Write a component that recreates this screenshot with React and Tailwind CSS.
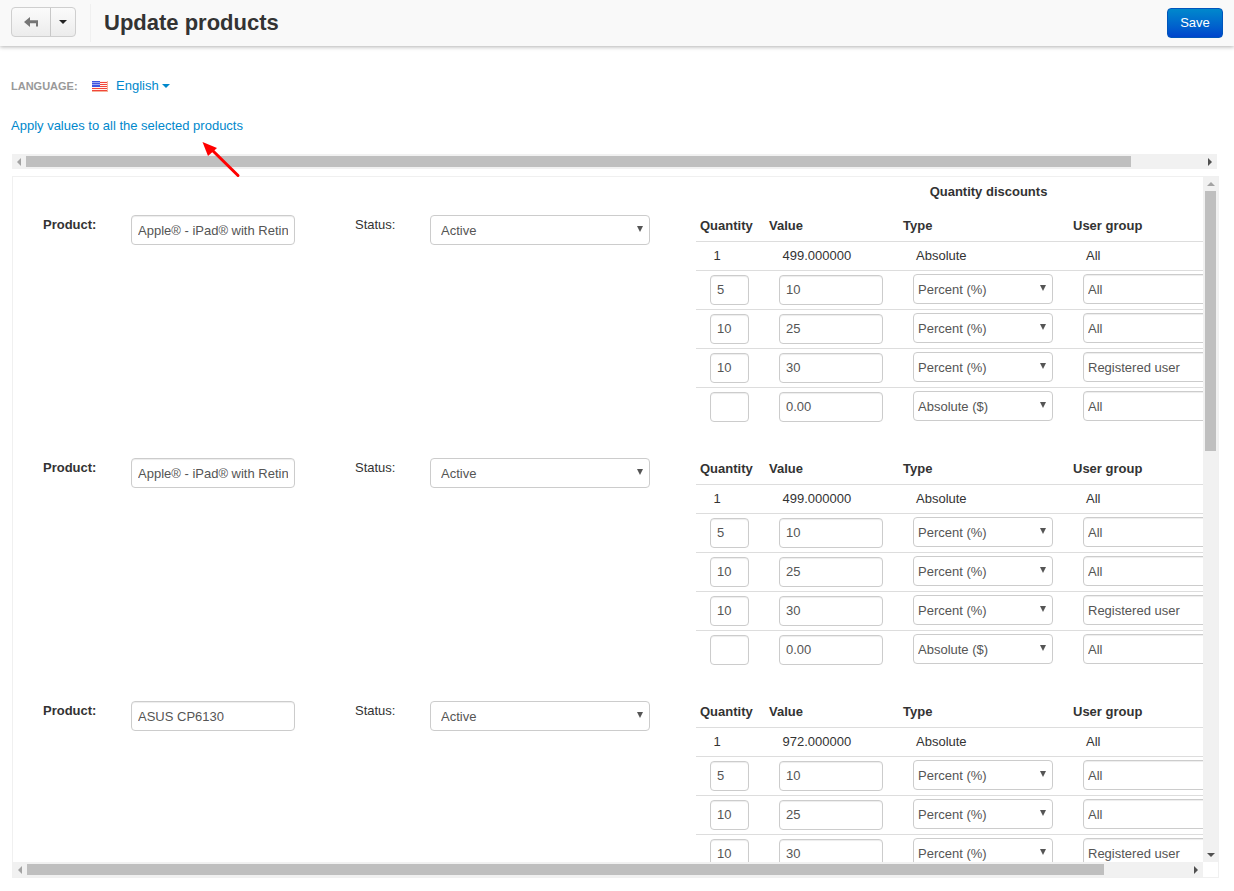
const inputCls = "h-[30px] bg-white border border-[#cccccc] rounded-[4px] px-[6px] text-[13px] text-[#555555] shadow-[inset_0_1px_1px_rgba(0,0,0,0.075)] outline-none";
const selectCls = "appearance-none h-[30px] w-full block bg-white border border-[#cccccc] rounded-[4px] pt-[2px] text-[13px] text-[#555555] outline-none";

const blocks = [
  { name: "Apple® - iPad® with Retina® Display", price: "499.000000" },
  { name: "Apple® - iPad® with Retina® Display", price: "499.000000" },
  { name: "ASUS CP6130", price: "972.000000" },
];
const rows = [
  { q: "5", v: "10", t: "Percent (%)", u: "All" },
  { q: "10", v: "25", t: "Percent (%)", u: "All" },
  { q: "10", v: "30", t: "Percent (%)", u: "Registered user" },
  { q: "", v: "0.00", t: "Absolute ($)", u: "All" },
];

function Flag() {
  const stripes = [1, 3, 5, 7, 9];
  return (
    <svg width="16" height="11" viewBox="0 0 16 11" className="block">
      <rect width="16" height="11" fill="#fff4ee" />
      {stripes.map((y) => (
        <rect key={y} x="0" y={y} width="16" height="1" fill="#f2453a" />
      ))}
      <rect x="0" y="10" width="16" height="1" fill="#f5b49a" />
      <rect x="15" y="0" width="1" height="11" fill="#f5b49a" />
      <rect width="8" height="6" fill="#3f55e0" />
      {[1, 3, 5, 7].map((x) =>
        [1, 3].map((y) => <rect key={x + "-" + y} x={x - 0.5} y={y} width="1" height="1" fill="#ffffff" />)
      )}
    </svg>
  );
}

function Tri({ dir, color = "#a3a3a3" }) {
  const pts = { l: "5,0 5,8 1,4", r: "1,0 1,8 5,4", u: "0,5 8,5 4,1", d: "0,1 8,1 4,5" }[dir];
  const wide = dir === "u" || dir === "d";
  return (
    <svg width={wide ? 8 : 6} height={wide ? 6 : 8} viewBox={wide ? "0 0 8 6" : "0 0 6 8"} className="block">
      <polygon points={pts} fill={color} />
    </svg>
  );
}

function Select({ value, options, wClass, padClass }) {
  return (
    <div className={"relative " + wClass}>
      <select defaultValue={value} className={selectCls + " " + padClass}>
        {options.map((o) => <option key={o}>{o}</option>)}
      </select>
      <svg width="6" height="6" viewBox="0 0 6 6" className="absolute right-[7px] top-[11px] block pointer-events-none">
        <polygon points="0,0 6,0 3,6" fill="#555555" />
      </svg>
    </div>
  );
}

function HBar({ thumbWidth, leftColor, rightColor = "#505050", wClass }) {
  return (
    <div className={"h-[15px] bg-[#f1f1f1] flex items-center shrink-0 " + wClass}>
      <div className="w-[14px] shrink-0 flex justify-center"><Tri dir="l" color={leftColor} /></div>
      <div className="flex-1 h-[11px] flex">
        <div style={{ width: thumbWidth }} className="h-full bg-[#bfbfbf]" />
      </div>
      <div className="w-[14px] shrink-0 flex justify-center"><Tri dir="r" color={rightColor} /></div>
    </div>
  );
}

function Block({ b }) {
  return (
    <div className="flex pb-[26px] pl-[30px]">
      <div className="w-[88px] shrink-0 pt-[6px] font-bold text-[13px] leading-[18px] text-[#333333]">Product:</div>
      <div className="w-[224px] shrink-0 pt-[5px]">
        <input readOnly value={b.name} className={inputCls + " w-[164px] block"} />
      </div>
      <div className="w-[75px] shrink-0 pt-[6px] text-[13px] leading-[18px] text-[#333333]">Status:</div>
      <div className="w-[266px] shrink-0 pt-[5px]">
        <Select value="Active" options={["Active", "Disabled", "Hidden"]} wClass="w-[220px]" padClass="pl-[10px]" />
      </div>
      <div className="w-[584px] shrink-0 text-[13px] text-[#333333]">
        <div className="h-[32px] border-b border-[#dddddd] flex items-center font-bold pt-[1px]">
          <div className="w-[69px] pl-[4px]">Quantity</div>
          <div className="w-[134px] pl-[4px]">Value</div>
          <div className="w-[170px] pl-[4px]">Type</div>
          <div className="pl-[4px]">User group</div>
        </div>
        <div className="h-[29px] border-b border-[#dddddd] flex items-center">
          <div className="w-[69px] pl-[17.5px]">1</div>
          <div className="w-[134px] pl-[17.5px]">{b.price}</div>
          <div className="w-[170px] pl-[17px]">Absolute</div>
          <div className="pl-[17px]">All</div>
        </div>
        {rows.map((r, i) => (
          <div key={i} className={"h-[39px] flex items-start " + (i < 3 ? "border-b border-[#dddddd]" : "")}>
            <div className="w-[69px] pl-[14px] pt-[4px]">
              <input readOnly value={r.q} className={inputCls + " w-[39px] block pb-[2px]"} />
            </div>
            <div className="w-[134px] pl-[14px] pt-[4px]">
              <input readOnly value={r.v} className={inputCls + " w-[104px] block pb-[2px]"} />
            </div>
            <div className="w-[170px] pl-[14px] pt-[3px]">
              <Select value={r.t} options={["Percent (%)", "Absolute ($)"]} wClass="w-[140px]" padClass="pl-[4px]" />
            </div>
            <div className="pl-[14px] pt-[3px]">
              <input readOnly value={r.u} className={inputCls + " w-[140px] block pl-[4px]"} />
            </div>
          </div>
        ))}
      </div>
    </div>
  );
}

export default function App() {
  return (
    <div className="relative h-[891px] overflow-hidden bg-white font-['Liberation_Sans',Arial,sans-serif]">
      <header className="h-[46px] bg-[#f9f9f9] shadow-[0_1px_4px_rgba(0,0,0,0.3)] flex items-center pl-[11px] pr-[11px]">
        <div className="flex h-[30px] w-[65px] mt-[-2px] border border-[#cfcfcf] rounded-[4px] bg-gradient-to-b from-[#fbfbfb] to-[#ececec]">
          <div className="w-[39px] flex items-center justify-center border-r border-[#c8c8c8]">
            <svg width="14" height="10" viewBox="0 0 14 10" className="block">
              <path d="M0 5 L6 0 V3.2 H14 V9.5 H12 V6.2 H6 V10 Z" fill="#757575" />
            </svg>
          </div>
          <div className="flex-1 flex items-center justify-center">
            <svg width="8" height="4" viewBox="0 0 8 4" className="block"><polygon points="0,0 8,0 4,4" fill="#222222" /></svg>
          </div>
        </div>
        <div className="w-px h-[38px] bg-[#f0f0f0] ml-[14px] mr-[13px]" />
        <h1 className="text-[22px] font-bold text-[#333333] leading-none">Update products</h1>
        <button className="ml-auto w-[56px] h-[30px] rounded-[4px] bg-gradient-to-b from-[#0088cc] to-[#0044cc] border border-[#0055bb] text-white text-[13px]">Save</button>
      </header>

      <div className="pl-[11px] pr-[15px] pt-[32px]">
        <div className="flex items-center h-[16px]">
          <span className="w-[81px] text-[11px] font-bold text-[#999999]">LANGUAGE:</span>
          <Flag />
          <a className="ml-[8px] text-[13px] text-[#0088cc]">English</a>
          <span className="ml-[3px] w-0 h-0 border-x-[4px] border-x-transparent border-t-[4px] border-t-[#0088cc]" />
        </div>
        <a className="block mt-[24px] text-[13px] leading-[16px] text-[#0088cc]">Apply values to all the selected products</a>

        <HBar wClass="mt-[20px] ml-[1px] w-[1205px]" thumbWidth={1105} leftColor="#a3a3a3" />

        <div className="mt-[7px] ml-[1px] w-[1207px] h-[702px] border border-[#f0f0f0] flex flex-col">
          <div className="flex h-[685px]">
            <div className="w-[1190px] overflow-hidden">
              <div className="w-[1300px]">
                <div className="h-[33px] pl-[684px] w-[1267px] text-center font-bold text-[13px] text-[#333333] pt-[6px] leading-[18px]">Quantity discounts</div>
                {blocks.map((b, i) => <Block key={i} b={b} />)}
              </div>
            </div>
            <div className="w-[15px] shrink-0 bg-[#f1f1f1] flex flex-col items-center">
              <div className="h-[14px] flex items-center justify-center"><Tri dir="u" /></div>
              <div className="w-[11px] h-[260px] bg-[#bfbfbf]" />
              <div className="flex-1" />
              <div className="h-[14px] flex items-center justify-center"><Tri dir="d" color="#505050" /></div>
            </div>
          </div>
          <div className="flex">
            <HBar wClass="w-[1190px]" thumbWidth={1077} leftColor="#a3a3a3" />
            <div className="w-[15px] h-[15px] bg-white" />
          </div>
        </div>
      </div>

      <svg className="absolute left-[200px] top-[138px]" width="44" height="42" viewBox="0 0 44 42">
        <line x1="38" y1="37.5" x2="10" y2="10" stroke="#ff0000" strokeWidth="3" strokeLinecap="round" />
        <polygon points="2.5,4 17,10 8,18" fill="#ff0000" />
      </svg>
    </div>
  );
}
